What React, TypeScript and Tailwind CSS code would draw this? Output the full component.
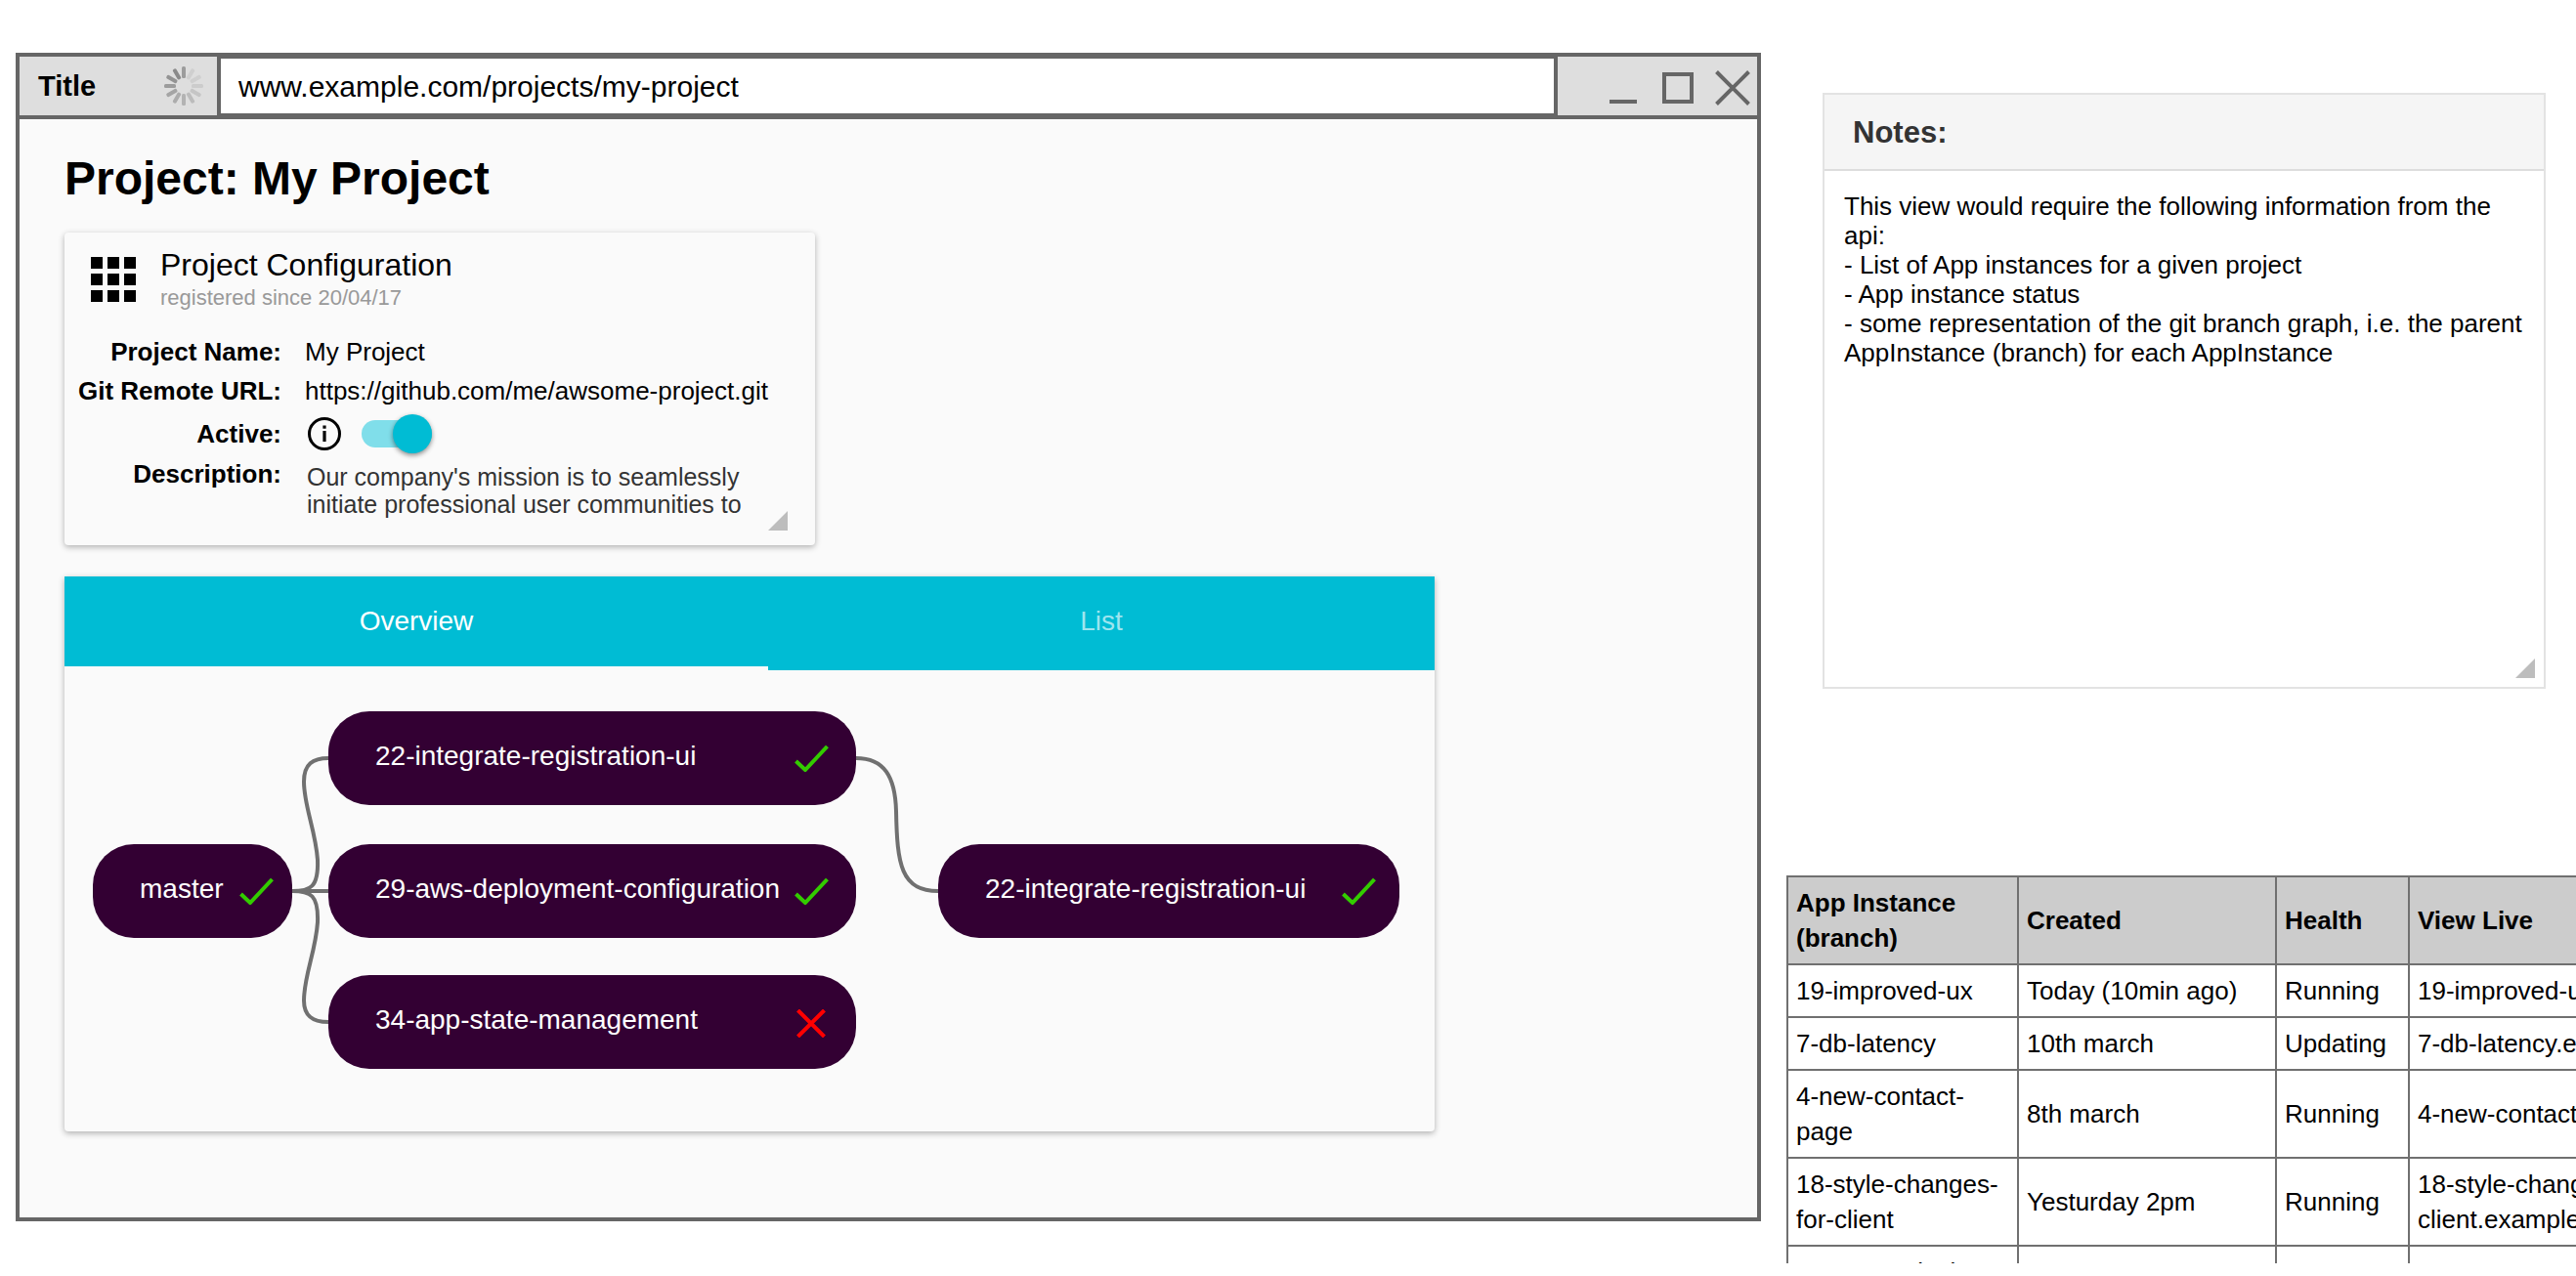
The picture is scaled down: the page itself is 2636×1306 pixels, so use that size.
const F = "font-['Liberation_Sans',Arial,sans-serif]";

function Spinner() {
  const ops = [0.55, 0.12, 0.12, 0.15, 0.2, 0.28, 0.36, 0.42, 0.48, 0.55, 0.62, 0.7];
  return (
    <svg width="42" height="42" viewBox="-21 -21 42 42" className="shrink-0">
      {ops.map((o, i) => (
        <rect key={i} x="-2" y="-20" width="4" height="12" rx="1.5" fill="#666" opacity={o} transform={`rotate(${i * 30})`} />
      ))}
    </svg>
  );
}

function Check({ className }: { className: string }) {
  return (
    <svg viewBox="0 0 35 27" className={className} width="35" height="27">
      <path d="M1.5 16 L11 25 L33.5 1" fill="none" stroke="#33cc00" strokeWidth="4" />
    </svg>
  );
}

function Cross({ className }: { className: string }) {
  return (
    <svg viewBox="0 0 30 29" className={className} width="30" height="29">
      <path d="M1.5 1 L28.5 28 M28.5 1 L1.5 28" fill="none" stroke="#ff0000" strokeWidth="4" />
    </svg>
  );
}

function Node({ label, pos, icon, iconPos }: { label: string; pos: string; icon: "check" | "cross"; iconPos: string }) {
  return (
    <div className={`absolute h-24 rounded-[42px] bg-[#330033] text-white text-[28px] flex items-center ${pos}`}>
      <span className="absolute left-12 top-[28px] leading-9 whitespace-nowrap">{label}</span>
      {icon === "check" ? <Check className={`absolute top-[35px] ${iconPos}`} /> : <Cross className={`absolute top-[35px] ${iconPos}`} />}
    </div>
  );
}

const rows: [string, string, string, string][] = [
  ["19-improved-ux", "Today (10min ago)", "Running", "19-improved-ux.example.com"],
  ["7-db-latency", "10th march", "Updating", "7-db-latency.example.com"],
  ["4-new-contact-page", "8th march", "Running", "4-new-contact-page.example.com"],
  ["18-style-changes-for-client", "Yesturday 2pm", "Running", "18-style-changes-for-client.example.com"],
  ["22-some-pixel-fixes", "6th march", "Running", "22-some-pixel-fixes.example.com"],
];

export default function App() {
  return (
    <div className={`${F} w-[2636px] h-[1306px] overflow-hidden bg-white flex items-start text-black`}>
      <div className="ml-4 mt-[54px] w-[1786px] h-[1196px] shrink-0 border-4 border-[#666] bg-[#fafafa] flex flex-col">
        <div className="h-[64px] shrink-0 border-b-4 border-[#666] bg-[#dedede] flex">
          <div className="w-[202px] shrink-0 flex items-center pl-[19px] pr-[13px] justify-between">
            <span className="font-bold text-[29px] leading-none">Title</span>
            <Spinner />
          </div>
          <div className="w-[1372px] shrink-0 bg-white border-x-4 border-y-2 border-[#666] flex items-center pl-[18px] text-[30px]">
            www.example.com/projects/my-project
          </div>
          <div className="flex-1 relative">
            <div className="absolute left-[53px] top-[44px] w-7 h-1 bg-[#666]" />
            <div className="absolute left-[107px] top-4 w-8 h-8 border-4 border-[#666]" />
            <svg className="absolute left-[161px] top-[14px]" width="36" height="36" viewBox="0 0 36 36">
              <path d="M1.5 1.5 L34.5 34.5 M34.5 1.5 L1.5 34.5" stroke="#666" strokeWidth="4" fill="none" />
            </svg>
          </div>
        </div>

        <div className="flex-1 pl-[46px] flex flex-col items-start">
          <h1 className="mt-[32px] font-bold text-[48px] leading-[58px]">Project: My Project</h1>

          <div className="mt-[26px] w-[768px] h-[320px] relative rounded bg-[#fafafa] shadow-[0_2px_6px_rgba(0,0,0,0.3)] shrink-0">
            <div className="pl-[27px] pt-[25px] flex">
              <div className="grid grid-cols-3 gap-[5px] w-[46px] h-[46px]">
                {Array.from({ length: 9 }).map((_, i) => (
                  <div key={i} className="bg-black w-3 h-3" />
                ))}
              </div>
              <div className="ml-[25px] -mt-[10px]">
                <div className="text-[32px] leading-9">Project Configuration</div>
                <div className="text-[22px] leading-[26px] text-[#999] mt-[3px]">registered since 20/04/17</div>
              </div>
            </div>
            <div className="mt-[22px] grid grid-cols-[222px_1fr] gap-x-[24px] text-[26px]">
              <div className="font-bold text-right leading-[40px]">Project Name:</div>
              <div className="leading-[40px]">My Project</div>
              <div className="font-bold text-right leading-[40px]">Git Remote URL:</div>
              <div className="leading-[40px]">https://github.com/me/awsome-project.git</div>
              <div className="font-bold text-right leading-[48px]">Active:</div>
              <div className="flex items-center h-[48px] pl-[3px]">
                <svg width="34" height="34" viewBox="0 0 34 34">
                  <circle cx="17" cy="17" r="15.5" fill="none" stroke="#000" strokeWidth="3" />
                  <rect x="15.4" y="14" width="3.2" height="11" fill="#000" />
                  <rect x="15.4" y="8.5" width="3.2" height="3.2" fill="#000" />
                </svg>
                <div className="relative ml-[21px] w-[72px] h-7 rounded-full bg-[#80deea]">
                  <div className="absolute left-[32px] -top-[6px] w-10 h-10 rounded-full bg-[#00bcd4] shadow-[0_2px_5px_rgba(0,0,0,0.45)]" />
                </div>
              </div>
              <div className="font-bold text-right leading-[34px]">Description:</div>
              <div className="pl-[2px] pt-[6px] leading-[28px] text-[#333] text-[25px] whitespace-nowrap">
                Our company's mission is to seamlessly
                <br />
                initiate professional user communities to
              </div>
            </div>
            <svg className="absolute left-[720px] top-[285px]" width="20" height="20" viewBox="0 0 20 20">
              <path d="M20 0 V20 H0 Z" fill="#bdbdbd" />
            </svg>
          </div>

          <div className="mt-[32px] w-[1402px] h-[568px] relative rounded-b bg-[#fafafa] shadow-[0_2px_6px_rgba(0,0,0,0.3)] shrink-0">
            <div className="h-24 flex bg-[#00bcd4] text-[28px]">
              <div className="w-[720px] h-24 flex items-center justify-center text-white relative pb-[4px]">
                Overview
                <div className="absolute left-0 right-0 bottom-0 h-1 bg-[#fafafa]" />
              </div>
              <div className="flex-1 flex items-center justify-center text-[#9ee5ef] pb-[4px]">List</div>
            </div>
            <svg className="absolute left-0 top-0 pointer-events-none" width="1402" height="568" viewBox="66 590 1402 568">
              <g fill="none" stroke="#707070" strokeWidth="4">
                <path d="M299 912 H336" />
                <path d="M299 912 C 318 912 326 908 325 880 C 323 850 311 825 311 800 C 311 782 320 776 336 776" />
                <path d="M299 912 C 318 912 326 916 325 944 C 323 974 311 999 311 1024 C 311 1040 320 1046 336 1046" />
                <path d="M876 776 C 905 776 916 795 917 830 C 918 885 922 912 960 912" />
              </g>
            </svg>
            <Node label="master" pos="left-[29px] top-[274px] w-[204px]" icon="check" iconPos="right-[19px]" />
            <Node label="22-integrate-registration-ui" pos="left-[270px] top-[138px] w-[540px]" icon="check" iconPos="right-[28px]" />
            <Node label="29-aws-deployment-configuration" pos="left-[270px] top-[274px] w-[540px]" icon="check" iconPos="right-[28px]" />
            <Node label="34-app-state-management" pos="left-[270px] top-[408px] w-[540px]" icon="cross" iconPos="right-[31px]" />
            <Node label="22-integrate-registration-ui" pos="left-[894px] top-[274px] w-[472px]" icon="check" iconPos="right-[24px]" />
          </div>
        </div>
      </div>

      <div className="ml-[26px] w-[808px] h-[1293px] shrink-0 overflow-hidden">
        <div className="ml-[37px] mt-[95px] w-[740px] h-[610px] relative border-2 border-[#e3e3e3] bg-white">
          <div className="h-[78px] bg-[#f5f5f5] border-b-2 border-[#ddd] flex items-center pl-[29px] pt-[2px] text-[#333] font-bold text-[31px]">
            Notes:
          </div>
          <div className="pl-[20px] pr-3 pt-[21px] text-[26px] leading-[30px]">
            This view would require the following information from the api:
            <br />- List of App instances for a given project
            <br />- App instance status
            <br />- some representation of the git branch graph, i.e. the parent AppInstance (branch) for each AppInstance
          </div>
          <svg className="absolute left-[707px] top-[577px]" width="20" height="20" viewBox="0 0 20 20">
            <path d="M20 0 V20 H0 Z" fill="#bdbdbd" />
          </svg>
        </div>

        <table className="mt-[191px] w-[1057px] table-fixed border-collapse text-[26px] leading-[36px] max-w-none">
          <colgroup>
            <col className="w-[236px]" />
            <col className="w-[264px]" />
            <col className="w-[136px]" />
            <col className="w-[421px]" />
          </colgroup>
          <thead>
            <tr className="bg-[#ccc] font-bold text-left">
              {["App Instance (branch)", "Created", "Health", "View Live"].map((h) => (
                <th key={h} className="border-2 border-[#707070] px-2 py-2">{h}</th>
              ))}
            </tr>
          </thead>
          <tbody>
            {rows.map((r, i) => (
              <tr key={i}>
                {r.map((c, j) => (
                  <td key={j} className="border-2 border-[#707070] px-2 py-2 break-words">{c}</td>
                ))}
              </tr>
            ))}
          </tbody>
        </table>
      </div>
    </div>
  );
}
